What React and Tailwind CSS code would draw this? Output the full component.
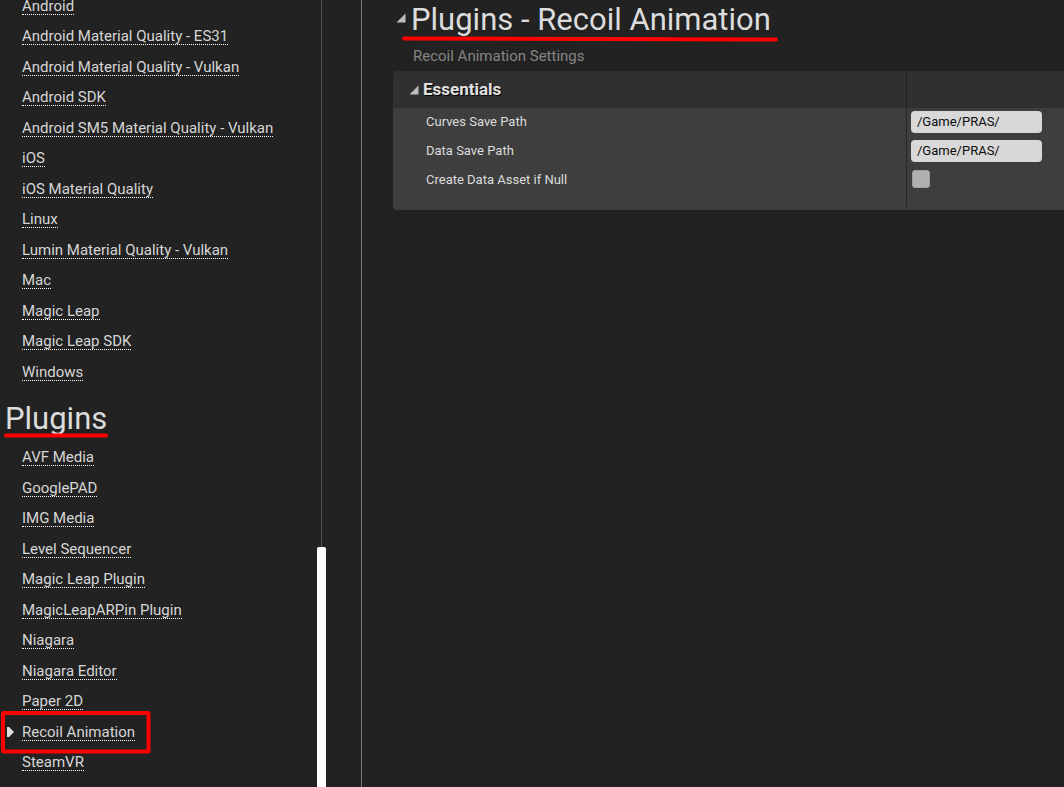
const platforms = [
  'Android',
  'Android Material Quality - ES31',
  'Android Material Quality - Vulkan',
  'Android SDK',
  'Android SM5 Material Quality - Vulkan',
  'iOS',
  'iOS Material Quality',
  'Linux',
  'Lumin Material Quality - Vulkan',
  'Mac',
  'Magic Leap',
  'Magic Leap SDK',
  'Windows',
];

const plugins = [
  'AVF Media',
  'GooglePAD',
  'IMG Media',
  'Level Sequencer',
  'Magic Leap Plugin',
  'MagicLeapARPin Plugin',
  'Niagara',
  'Niagara Editor',
  'Paper 2D',
  'Recoil Animation',
  'SteamVR',
];

function SectionLink({ children }) {
  return (
    <a
      href="#"
      className="block w-fit whitespace-nowrap border-b border-dotted border-white pb-px text-[15px] leading-[13px] text-[#d6d6d6]"
    >
      {children}
    </a>
  );
}

function SelectedMark() {
  return (
    <>
      <svg className="absolute left-[7px] top-[1px]" width="7" height="10" viewBox="0 0 7 10" aria-hidden="true">
        <path d="M0 0H2L7 5L2 10H0Z" fill="#e0e0e0" />
      </svg>
      <svg className="absolute left-0 -top-4" width="152" height="44" viewBox="0 0 152 44" aria-hidden="true">
        <rect x="3" y="3" width="145.500" height="38.500" rx="0.500" fill="none" stroke="#ff0000" strokeWidth="4" strokeLinejoin="round" />
      </svg>
    </>
  );
}

function Expander({ className }) {
  return (
    <svg className={className} width="10" height="10" viewBox="0 0 10 10" aria-hidden="true">
      <path d="M9.500 0.500V9.500H0.500Z" fill="#bdbdbd" />
    </svg>
  );
}

function PropertyRow({ id, label, children }) {
  return (
    <div className="grid h-[29px] grid-cols-[513fr_158fr]">
      <label htmlFor={id} className="pl-[33px] text-[13px] leading-[28px] text-[#dcdcdc]">
        {label}
      </label>
      <div className="flex items-start border-l border-[#262626] pl-1 pt-[3px]">{children}</div>
    </div>
  );
}

function PathInput({ id }) {
  return (
    <input
      id={id}
      type="text"
      defaultValue="/Game/PRAS/"
      className="h-[22px] w-[131px] rounded bg-[#d8d8d8] px-[6px] pb-[2px] text-[13px] text-[#0c0c0c] outline-none"
    />
  );
}

export default function App() {
  return (
    <div className="flex h-screen overflow-hidden bg-[#222222] font-['Roboto',sans-serif]">
      <aside className="flex w-[362px] shrink-0 border-r border-[#7b7b7b]">
        <nav className="w-[317px] overflow-hidden" aria-label="Settings sections">
          <ul className="pl-[22px]">
            {platforms.map((name) => (
              <li key={name} className="odd:h-[30px] even:h-[31px]">
                <SectionLink>{name}</SectionLink>
              </li>
            ))}
          </ul>
          <h2 className="relative mb-[9px] w-fit pl-[5px] text-[31px] leading-[46px] text-[#dcdcdc]">
            Plugins
            <svg className="absolute left-[3px] top-[37px]" width="106" height="5" viewBox="0 0 106 5" aria-hidden="true">
              <path d="M3 2.500H103" stroke="#ff0000" strokeWidth="4" strokeLinecap="round" />
            </svg>
          </h2>
          <ul>
            {plugins.map((name) => (
              <li key={name} className="relative pl-[22px] odd:h-[31px] even:h-[30px]">
                <SectionLink>{name}</SectionLink>
                {name === 'Recoil Animation' && <SelectedMark />}
              </li>
            ))}
          </ul>
        </nav>
        <div className="flex w-[9px] flex-col items-center">
          <div className="w-px flex-1 bg-[#505050]" />
          <div className="h-[240px] w-full rounded-t-xs bg-white" />
        </div>
      </aside>

      <main className="min-w-0 flex-1 pl-[31px]">
        <h1 className="relative flex w-fit whitespace-nowrap pl-[3px] text-[31px] leading-10 text-[#dcdcdc]">
          <Expander className="mr-[5px] mt-[13px]" />
          Plugins - Recoil Animation
          <svg className="absolute left-[8px] top-[36px]" width="380" height="6" viewBox="0 0 380 6" aria-hidden="true">
            <path d="M3 2.500L375 3.500" stroke="#ff0000" strokeWidth="4" strokeLinecap="round" />
          </svg>
        </h1>
        <p className="pl-5 pt-[2px] text-[15px] leading-[29px] text-[#858585]">Recoil Animation Settings</p>

        <section className="overflow-hidden rounded-l bg-[#3e3e3e] pb-[3px]">
          <div className="grid h-[37px] grid-cols-[513fr_158fr] bg-[#303030]">
            <h2 className="flex items-center pl-4 text-[17px] font-bold text-[#e2e2e2] [text-shadow:1px_1px_0_#000]">
              <Expander className="mr-1" />
              Essentials
            </h2>
            <div className="border-l border-[#222222]" />
          </div>
          <PropertyRow id="curves-path" label="Curves Save Path">
            <PathInput id="curves-path" />
          </PropertyRow>
          <PropertyRow id="data-path" label="Data Save Path">
            <PathInput id="data-path" />
          </PropertyRow>
          <PropertyRow id="create-asset" label="Create Data Asset if Null">
            <input
              id="create-asset"
              type="checkbox"
              className="ml-px mt-px size-[18px] appearance-none rounded-[3px] border border-[#a0a0a0] bg-[#b0b0b0] checked:bg-[#e0e0e0]"
            />
          </PropertyRow>
          <div className="grid h-3 grid-cols-[513fr_158fr]">
            <div />
            <div className="border-l border-[#262626]" />
          </div>
        </section>
      </main>
    </div>
  );
}
